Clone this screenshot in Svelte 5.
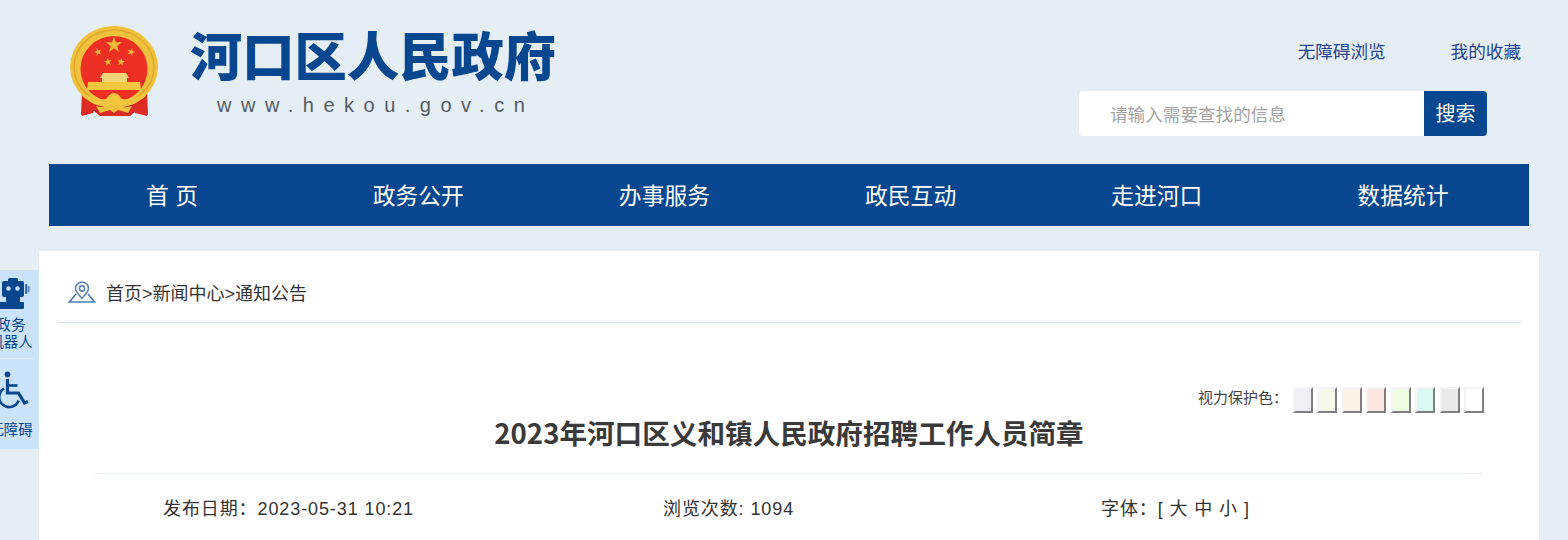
<script lang="ts">
	const navItems = ['首 页', '政务公开', '办事服务', '政民互动', '走进河口', '数据统计'];
	const eyeColors = ['#eef0f5', '#f6f9e8', '#fdf2e6', '#fde6e2', '#effbe2', '#dbf8f3', '#e9e9ee', '#ffffff'];

	function star(cx: number, cy: number, r: number, turn = 0) {
		const pts = [];
		for (let i = 0; i < 10; i++) {
			const rad = i % 2 ? r * 0.382 : r;
			const a = -Math.PI / 2 + (i * Math.PI) / 5 + turn;
			pts.push(`${(cx + rad * Math.cos(a)).toFixed(2)},${(cy + rad * Math.sin(a)).toFixed(2)}`);
		}
		return pts.join(' ');
	}
</script>

<div class="page">
	<aside class="float-bar">
		<div class="float-item">
			<svg width="30" height="34" viewBox="0 0 30 34" fill="#06478f">
				<rect x="8" y="0" width="10" height="4" rx="1.5" />
				<path d="M4 3h18a2 2 0 0 1 2 2v12a2 2 0 0 1-2 2H4a2 2 0 0 1-2-2V5a2 2 0 0 1 2-2z" />
				<circle cx="8.500" cy="10.500" r="2.200" fill="#cbe2fb" />
				<circle cx="17.500" cy="10.500" r="2.200" fill="#cbe2fb" />
				<rect x="6" y="19" width="14" height="5" />
				<rect x="-2" y="24" width="26" height="7" rx="1" />
				<rect x="25" y="6" width="2.400" height="10" rx="1" opacity="0.75" />
				<rect x="28" y="8" width="1.600" height="6" rx="0.8" opacity="0.6" />
			</svg>
			<span>政务<br />机器人</span>
		</div>
		<div class="float-item second">
			<svg width="32" height="38" viewBox="0 0 32 38" fill="none" stroke="#06478f" stroke-width="2.6">
				<circle cx="8.500" cy="3.400" r="2.800" fill="#06478f" stroke="none" />
				<path d="M8.500 8v14h11l6 10 3.400-1.400" stroke-width="3.200" />
				<path d="M8.500 14.500h10" />
				<path d="M5 17.500a10 10 0 1 0 14.600 12" />
			</svg>
			<span>无障碍</span>
		</div>
	</aside>

	<header class="top">
		<div class="brand">
			<svg class="emblem" width="90" height="92" viewBox="0 0 90 92">
				<!-- ribbons behind the ring -->
				<path d="M12 66 L11 90 L24 86 L30 91 L60 91 L66 86 L78 90 L77 66 Z" fill="#dc2a24" />
				<ellipse cx="44" cy="42" rx="44" ry="41" fill="#f0c13c" />
				<ellipse cx="44" cy="42" rx="40" ry="37" fill="none" stroke="#e2a72a" stroke-width="1.500" />
				<ellipse cx="44" cy="44" rx="33.500" ry="33" fill="#ee2f24" />
				<polygon points={star(44, 20, 8.500)} fill="#edbb3a" />
				<polygon points={star(28, 27, 4.200, -0.3)} fill="#edbb3a" />
				<polygon points={star(61, 27, 4.200, 0.3)} fill="#edbb3a" />
				<polygon points={star(38, 37, 4.200, -0.15)} fill="#edbb3a" />
				<polygon points={star(51, 37, 4.200, 0.15)} fill="#edbb3a" />
				<!-- gate -->
				<path d="M33 48h23l3 5h-2v4H32v-4h-2z" fill="#f4d67a" />
				<path d="M18 57h52l1 8H17z" fill="#f3c83f" />
				<path d="M20 65h48l-3 4H23z" fill="#ee2f24" />
				<!-- cloth and flower -->
				<path d="M10 66 Q26 76 36 74 Q44 62 52 74 Q62 76 78 66 L74 74 Q62 82 52 80 L36 80 Q26 82 14 74z" fill="#f4c63d" />
				<path d="M13 72 L25 80 L23 88 L12 91z" fill="#dc2a24" />
				<path d="M75 72 L63 80 L65 88 L77 91z" fill="#dc2a24" />
				<path d="M26 81 Q36 84 44 79 Q52 84 62 81 L58 88 L48 85 L44 88 L40 85 L30 88z" fill="#f0c13c" />
			</svg>
			<div class="brand-text">
				<div class="site-name">河口区人民政府</div>
				<div class="site-url">www.hekou.gov.cn</div>
			</div>
		</div>
		<div class="tools">
			<div class="links">
				<span>无障碍浏览</span>
				<span>我的收藏</span>
			</div>
			<div class="search">
				<div class="search-input">请输入需要查找的信息</div>
				<div class="search-btn">搜索</div>
			</div>
		</div>
	</header>

	<nav class="nav">
		{#each navItems as item}
			<div class="nav-item">{item}</div>
		{/each}
	</nav>

	<main class="card">
		<div class="crumbs">
			<svg width="28" height="22" viewBox="0 0 28 22" fill="none" stroke="#5d86b5" stroke-width="1.600">
				<path d="M8 13 L1.500 21 H26.500 L20 13" stroke="#4f7cb0" />
				<path d="M14 17.500 C10 13 7.500 10.500 7.500 7.500 a6.500 6.500 0 0 1 13 0 C20.500 10.500 18 13 14 17.500z" />
				<circle cx="14" cy="7.500" r="2.600" />
			</svg>
			<span>首页&gt;新闻中心&gt;通知公告</span>
		</div>

		<div class="eye-row">
			<span class="eye-label">视力保护色：</span>
			{#each eyeColors as color}
				<span class="eye-swatch" style="background: {color}"></span>
			{/each}
		</div>

		<h1 class="title">2023年河口区义和镇人民政府招聘工作人员简章</h1>

		<div class="meta">
			<span class="meta-date">发布日期：2023-05-31 10:21</span>
			<span class="meta-views">浏览次数: 1094</span>
			<span class="meta-font">字体：[ 大 中 小 ]</span>
		</div>
	</main>
</div>

<style>
	:global(body) {
		background: #e5edf5;
		overflow: hidden;
	}

	.page {
		position: relative;
		height: 540px;
		overflow: hidden;
		font-family: "Liberation Sans", "Noto Sans CJK SC", sans-serif;
		color: #333;
	}

	.float-bar {
		position: absolute;
		left: -12px;
		top: 270px;
		width: 51px;
		height: 179px;
		background: #cbe2fb;
		color: #06478f;
		font-size: 14.4px;
		line-height: 17px;
		text-align: center;
	}

	.float-item {
		display: flex;
		flex-direction: column;
		align-items: center;
		height: 89px;
		padding: 8px 0 0 0;
		box-sizing: border-box;
		border-bottom: 1px solid #deebfa;
		width: 46px;
	}

	.float-item svg {
		flex: none;
		margin-left: 8px;
	}

	.float-item span {
		margin-top: 5px;
		white-space: nowrap;
	}

	.float-item.second {
		border-bottom: none;
		padding-top: 12px;
	}

	.float-item.second span {
		margin-top: 13px;
	}

	.top {
		display: flex;
		justify-content: space-between;
		height: 164px;
		padding: 0 47px 0 70px;
		box-sizing: border-box;
	}

	.brand {
		display: flex;
		padding-top: 25px;
	}

	.emblem {
		flex: none;
	}

	.brand-text {
		margin-left: 30px;
		padding-top: 1px;
	}

	.site-name {
		font-size: 52.3px;
		line-height: 64px;
		font-weight: 900;
		color: #06478f;
		white-space: nowrap;
	}

	.site-url {
		margin: 3px 0 0 27px;
		font-size: 20px;
		line-height: 24px;
		letter-spacing: 9.500px;
		color: #555c66;
	}

	.tools {
		display: flex;
		flex-direction: column;
		align-items: flex-end;
		width: 442px;
		padding-top: 40px;
	}

	.links {
		display: flex;
		gap: 65px;
		font-size: 17.6px;
		line-height: 24px;
		color: #27458f;
	}

	.search {
		display: flex;
		align-self: flex-start;
		width: 408px;
		height: 45px;
		margin-top: 27px;
		border-radius: 4px;
		overflow: hidden;
		background: #fff;
	}

	.search-input {
		flex: 1;
		padding-left: 31px;
		font-size: 17.6px;
		line-height: 49px;
		color: #a3a3a3;
	}

	.search-btn {
		width: 63px;
		background: #06478f;
		color: #fff;
		font-size: 20px;
		line-height: 47px;
		text-align: center;
	}

	.nav {
		display: flex;
		height: 62px;
		margin: 0 39px 0 49px;
		padding-right: 3px;
		background: #06478f;
	}

	.nav-item {
		flex: 1;
		color: #fff;
		font-size: 22.8px;
		line-height: 65px;
		text-align: center;
		white-space: pre;
	}

	.card {
		height: 289px;
		margin: 25px 29px 0 39px;
		padding: 0 19px;
		background: #fff;
		overflow: hidden;
	}

	.crumbs {
		display: flex;
		align-items: center;
		gap: 10px;
		height: 61px;
		padding: 10px 0 0 10px;
		border-bottom: 1px solid #d3e5f5;
		margin-right: -1px;
		font-size: 18px;
	}

	.eye-row {
		display: flex;
		justify-content: flex-end;
		gap: 4.500px;
		margin: 64px 36px 0 0;
		height: 26px;
	}

	.eye-label {
		margin-right: 0;
		font-size: 15px;
		line-height: 22px;
		color: #444;
	}

	.eye-swatch {
		width: 16px;
		height: 22px;
		border: 2px solid;
		border-color: #f4f4f4 #7f7f7f #7f7f7f #f4f4f4;
	}

	.title {
		margin: -4px 0 0 0;
		height: 64px;
		font-family: "Noto Sans CJK SC", sans-serif;
		font-size: 27.6px;
		line-height: 46px;
		font-weight: 700;
		text-align: center;
		color: #3a3a3a;
	}

	.meta {
		display: flex;
		margin: 0 37px;
		padding-top: 20px;
		border-top: 1px solid #ebf0f4;
		font-size: 18px;
		line-height: 30px;
		letter-spacing: 0.9px;
	}

	.meta-date {
		margin-left: 68px;
		width: 500px;
	}

	.meta-views {
		width: 438px;
	}
</style>
